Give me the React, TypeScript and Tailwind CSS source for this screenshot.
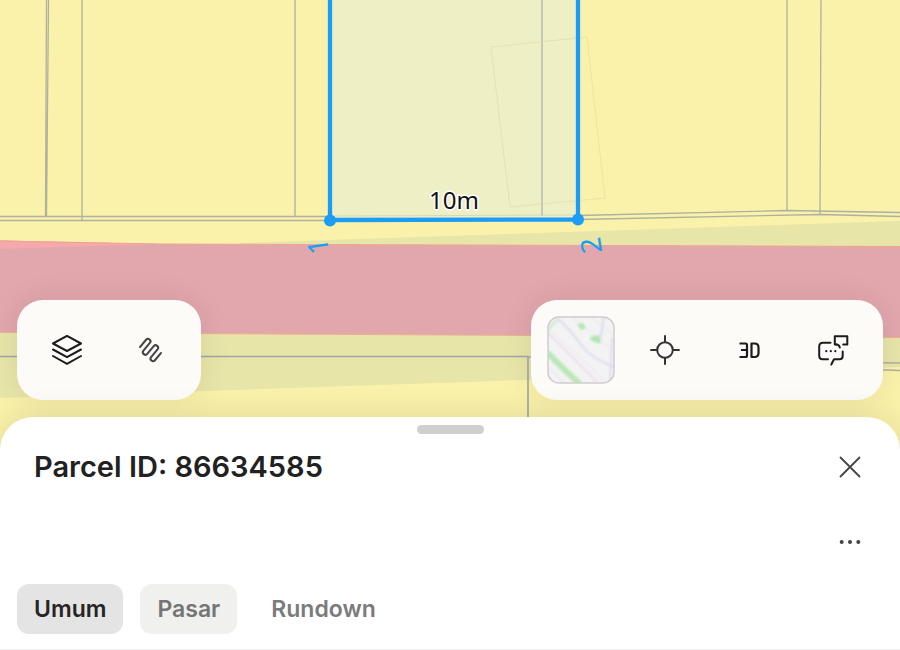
import type { ReactNode } from "react";

const tabs = [
  { name: "Umum", style: "bg-[#e4e4e4] text-[#252525]" },
  { name: "Pasar", style: "bg-[#f0f0ee] text-[#757575]" },
  { name: "Rundown", style: "text-[#7b7b7b]" },
];

const ParcelMap = () => {
  return (
    <svg
      className="absolute inset-0 h-full w-full"
      viewBox="0 0 900 460"
      preserveAspectRatio="xMidYMin slice"
      role="img"
      aria-label="Parcel map"
    >
      <rect width="900" height="460" fill="#faf2aa" />

      {/* road and verges */}
      <path d="M240 243 L900 221 V247 H240Z" fill="#e7e5a8" />
      <path d="M0 332 L900 337 V367 L0 398Z" fill="#e7e5a8" />
      <path d="M0 240.500 L160 244 L900 246.500 V337.500 L0 332.500Z" fill="#e2a6ad" />
      <path d="M0 240.500 L160 244 L0 249Z" fill="#f5a9ad" />
      <path d="M0 241 L160 244 L900 246.500" fill="none" stroke="#f0a392" />
      <path d="M0 332.500 L900 337.500" fill="none" stroke="#eeb08f" />

      {/* neighbouring boundaries */}
      <g fill="none" stroke="#adb19f" strokeWidth="1.300">
        <path d="M46.500 0 L45.500 216 M48.500 0 L46.500 216" />
        <path d="M82 0 V220 M295 0 V216 M787 0 V210 M821 0 L820 214" />
        <path d="M0 216.500 H330 M0 220.500 H330" />
        <path d="M578 215.500 L787 210.500 L900 212.500" />
        <path d="M578 219.500 L820 214.500 L900 216.500" />
        <path d="M0 356.500 H528 V420" stroke="#a0a6a5" strokeWidth="1.600" />
        <path d="M528 357 L900 363 M860 369 L900 370.500" />
      </g>

      {/* selected parcel */}
      <path d="M330 0 H578 V219 L330 220Z" fill="#eeefc5" />
      <path d="M542 0 V216" stroke="#b4bcb0" strokeWidth="1.500" />
      <path d="M330 216 L578 215" stroke="#d5d9b9" />
      <path
        d="M491 47 L587 37 L605 198 L510 207Z"
        fill="none"
        stroke="#d9d3a0"
        strokeOpacity=".45"
      />
      <path
        d="M330 0 V220 L578 219.500 V0"
        fill="none"
        stroke="#1b9cf5"
        strokeWidth="4.300"
      />
      <circle cx="330" cy="220.500" r="6" fill="#1b9cf5" />
      <circle cx="578" cy="219.500" r="6" fill="#1b9cf5" />

      <g className="font-['Noto_Sans',sans-serif]">
        <text
          x="454"
          y="209"
          textAnchor="middle"
          fontSize="24"
          fill="#111"
          stroke="#fff"
          strokeWidth="3"
          strokeLinejoin="round"
          paintOrder="stroke"
        >
          10m
        </text>
        <text
          transform="translate(329 253) rotate(-98)"
          fontSize="28"
          fill="#1b9cf5"
        >
          1
        </text>
        <text
          transform="translate(602 252) rotate(-98)"
          fontSize="28"
          fill="#1b9cf5"
        >
          2
        </text>
      </g>
    </svg>
  );
};

const Icon = ({ children }: { children: ReactNode }) => {
  return (
    <svg
      className="size-8"
      viewBox="0 0 32 32"
      fill="none"
      stroke="currentColor"
      strokeWidth="2"
      strokeLinecap="round"
      strokeLinejoin="round"
      aria-hidden="true"
    >
      {children}
    </svg>
  );
};

const ToolButton = ({
  label,
  children,
}: {
  label: string;
  children: ReactNode;
}) => {
  return (
    <button
      type="button"
      aria-label={label}
      className="flex size-[68px] items-center justify-center rounded-xl text-[#1c1c1c]"
    >
      {children}
    </button>
  );
};

const Toolbar = ({ children }: { children: ReactNode }) => {
  return (
    <div className="flex gap-4 rounded-[26px] bg-[#fdfbf7] p-4 shadow-[0_0_32px_rgba(0,0,0,0.08)]">
      {children}
    </div>
  );
};

const MapThumbnail = () => {
  return (
    <svg className="size-[68px]" viewBox="0 0 68 68" aria-hidden="true">
      <defs>
        <clipPath id="thumb">
          <rect x="1" y="1" width="66" height="66" rx="11" />
        </clipPath>
        <filter id="soft">
          <feGaussianBlur stdDeviation="0.8" />
        </filter>
      </defs>
      <g clipPath="url(#thumb)" fill="none">
        <rect width="68" height="68" fill="#f3f3f4" />
        <g filter="url(#soft)">
          <path
            d="M0 12 L62 68 M0 50 L18 68 M24 0 L68 36 M42 0 L68 20"
            stroke="#ebe9ee"
            strokeWidth="1.500"
          />
          <path d="M0 16 L50 66" stroke="#eadfe9" strokeWidth="2" />
          <path
            d="M10 2 Q24 14 34 29 Q46 44 68 51 M57 0 L53 24 M63 68 L65 22"
            stroke="#dddaea"
            strokeWidth="2"
          />
          <path d="M0 36 Q14 51 33 68" stroke="#b9e8b6" strokeWidth="6" />
          <path d="M0 14 L11 3" stroke="#d2ecd3" strokeWidth="3" />
          <path
            d="M30 8 L36 7 L39 12 L34 14Z M43 21 L52 19 L54 28 L44 25Z"
            fill="#b3e6b4"
          />
        </g>
      </g>
      <rect
        x="1"
        y="1"
        width="66"
        height="66"
        rx="11"
        fill="none"
        stroke="#cfccd2"
        strokeWidth="1.500"
      />
    </svg>
  );
};

const App = () => {
  return (
    <main className="relative flex min-h-screen flex-col overflow-hidden bg-white font-['Inter',sans-serif]">
      <section className="relative flex grow flex-col justify-end">
        <ParcelMap />
        <div className="relative flex items-end justify-between px-[17px] pb-[50px]">
          <Toolbar>
            <ToolButton label="Layers">
              <Icon>
                <path d="M16 1.800 L30 9.500 L16 17 L2 9.500Z" />
                <path d="M2 15.500 L16 23.200 L30 15.500" />
                <path d="M2 22 L16 29.800 L30 22" />
              </Icon>
            </ToolButton>
            <ToolButton label="Measure">
              <Icon>
                <path
                  transform="translate(15.500 16) rotate(40)"
                  d="M-10 4.500 V-5 a2.500 2.500 0 0 1 5 0 V5 a2.500 2.500 0 0 0 5 0 V-5 a2.500 2.500 0 0 1 5 0 V5 a2.500 2.500 0 0 0 5 0 V-4.500"
                  stroke="#444"
                />
              </Icon>
            </ToolButton>
          </Toolbar>
          <Toolbar>
            <ToolButton label="Base map">
              <MapThumbnail />
            </ToolButton>
            <ToolButton label="My location">
              <Icon>
                <g stroke="#333" strokeLinecap="butt">
                  <circle cx="16" cy="16" r="7.800" />
                  <path d="M16 1.300 V8 M16 24 V30.700 M1.300 16 H8 M24 16 H30.700" />
                </g>
              </Icon>
            </ToolButton>
            <ToolButton label="3D view">
              <Icon>
                <g strokeWidth="2.200" strokeLinecap="butt">
                  <path d="M6.500 9.500 H12.500 Q14 9.500 14 11 V21.500 Q14 23 12.500 23 H6.500 M8 16 H14" />
                  <path d="M18.500 9.500 H21.500 Q25.500 9.500 25.500 13.500 V19 Q25.500 23 21.500 23 H18.500Z" />
                </g>
              </Icon>
            </ToolButton>
            <ToolButton label="Feedback">
              <Icon>
                <path d="M13.500 8.800 H6 Q2.200 8.800 2.200 12.500 V21.500 Q2.200 25.300 5.500 25.300 H11" />
                <path d="M25.700 17.500 V22 Q25.700 25.300 22.500 25.300 H17 L14.300 30.500" />
                <path d="M19.500 10.500 H17.800 V2.200 H30.300 V10.500 H26.200" />
                <path d="M19.500 10.500 Q22 10.500 22.800 13.500" />
                <path
                  d="M9.300 17.200 h.01 M13.800 17.200 h.01 M18.300 17.200 h.01"
                  strokeWidth="2.200"
                />
              </Icon>
            </ToolButton>
          </Toolbar>
        </div>
      </section>

      <section className="relative -mt-[33px] rounded-t-[33px] border-b border-[#ebebeb] bg-white pt-2 pb-[15px] shadow-[0_0_32px_rgba(0,0,0,0.12)]">
        <div className="mx-auto h-[9px] w-[67px] rounded-full bg-[#cfcfcf]" />
        <div className="flex h-[66px] items-center justify-between px-[34px]">
          <h1 className="text-[29px] leading-9 font-semibold text-[#212121]">
            Parcel ID: 86634585
          </h1>
          <button type="button" aria-label="Close" className="text-[#444]">
            <svg className="size-8" viewBox="0 0 32 32" aria-hidden="true">
              <path
                d="M6.500 6.500 L25.500 25.500 M25.500 6.500 L6.500 25.500"
                stroke="currentColor"
                strokeWidth="1.800"
                strokeLinecap="round"
              />
            </svg>
          </button>
        </div>
        <div className="flex h-[84px] items-center justify-end px-[34px]">
          <button type="button" aria-label="More" className="text-[#444]">
            <svg
              className="size-8"
              viewBox="0 0 32 32"
              fill="currentColor"
              aria-hidden="true"
            >
              <circle cx="7.700" cy="16" r="2" />
              <circle cx="16" cy="16" r="2" />
              <circle cx="24.300" cy="16" r="2" />
            </svg>
          </button>
        </div>
        <nav className="flex gap-[17px] px-[17px]">
          {tabs.map((tab) => (
            <button
              key={tab.name}
              type="button"
              className={`h-[50px] rounded-xl px-[17px] text-[23px] font-semibold ${tab.style}`}
            >
              {tab.name}
            </button>
          ))}
        </nav>
      </section>
    </main>
  );
};

export default App;
